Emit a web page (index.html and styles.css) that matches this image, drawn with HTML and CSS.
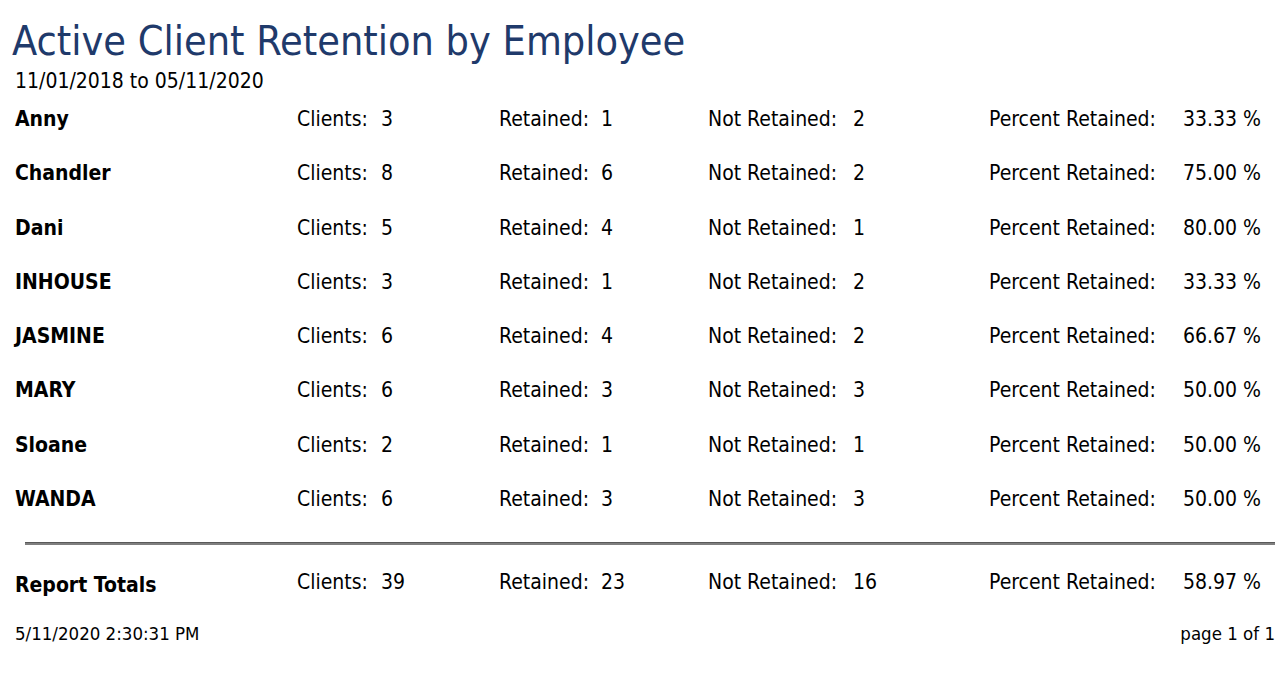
FILE: index.html
```html
<!DOCTYPE html>
<html>
<head>
<meta charset="utf-8">
<link rel="stylesheet" href="styles.css">
</head>
<body>
<div class="report">
  <h1 class="title">Active Client Retention by Employee</h1>
  <div class="range">11/01/2018 to 05/11/2020</div>
  <div class="rows">
    <div class="row"><span class="name">Anny</span><span>Clients:</span><span>3</span><span>Retained:</span><span>1</span><span>Not Retained:</span><span>2</span><span>Percent Retained:</span><span>33.33 %</span></div>
    <div class="row"><span class="name">Chandler</span><span>Clients:</span><span>8</span><span>Retained:</span><span>6</span><span>Not Retained:</span><span>2</span><span>Percent Retained:</span><span>75.00 %</span></div>
    <div class="row"><span class="name">Dani</span><span>Clients:</span><span>5</span><span>Retained:</span><span>4</span><span>Not Retained:</span><span>1</span><span>Percent Retained:</span><span>80.00 %</span></div>
    <div class="row"><span class="name">INHOUSE</span><span>Clients:</span><span>3</span><span>Retained:</span><span>1</span><span>Not Retained:</span><span>2</span><span>Percent Retained:</span><span>33.33 %</span></div>
    <div class="row"><span class="name">JASMINE</span><span>Clients:</span><span>6</span><span>Retained:</span><span>4</span><span>Not Retained:</span><span>2</span><span>Percent Retained:</span><span>66.67 %</span></div>
    <div class="row"><span class="name">MARY</span><span>Clients:</span><span>6</span><span>Retained:</span><span>3</span><span>Not Retained:</span><span>3</span><span>Percent Retained:</span><span>50.00 %</span></div>
    <div class="row"><span class="name">Sloane</span><span>Clients:</span><span>2</span><span>Retained:</span><span>1</span><span>Not Retained:</span><span>1</span><span>Percent Retained:</span><span>50.00 %</span></div>
    <div class="row"><span class="name">WANDA</span><span>Clients:</span><span>6</span><span>Retained:</span><span>3</span><span>Not Retained:</span><span>3</span><span>Percent Retained:</span><span>50.00 %</span></div>
  </div>
  <hr class="rule">
  <div class="row totals"><span class="name">Report Totals</span><span>Clients:</span><span>39</span><span>Retained:</span><span>23</span><span>Not Retained:</span><span>16</span><span>Percent Retained:</span><span>58.97 %</span></div>
  <div class="footer"><span>5/11/2020 2:30:31 PM</span><span>page 1 of 1</span></div>
</div>
</body>
</html>
```

FILE: styles.css
```css
html, body {
  margin: 0;
  padding: 0;
  background: #ffffff;
}
body {
  font-family: "DejaVu Sans Condensed", "DejaVu Sans", sans-serif;
  color: #000;
}
.report {
  width: 1288px;
  height: 675px;
  box-sizing: border-box;
  padding: 16px 13px 0 15px;
}
.title {
  margin: 0 0 0 -3px;
  font-weight: normal;
  font-size: 41px;
  line-height: 50px;
  color: #1f3a6b;
  letter-spacing: 0;
}
.range {
  font-size: 21px;
  line-height: 28px;
  margin-top: 1px;
}
.rows {
  margin-top: 11px;
}
.row {
  display: grid;
  grid-template-columns: 282px 84px 118px 102px 107px 145px 136px 194px auto;
  height: 54.3px;
  align-items: start;
  font-size: 21px;
  line-height: 26px;
}
.row .name {
  font-weight: bold;
}
.rule {
  margin: 2px 0 0 10px;
  border: 0;
  height: 3px;
  background: #7f7f7f;
  border-top: 1px solid #5a5a5a;
  box-sizing: border-box;
}
.totals {
  margin-top: 24px;
  height: 54px;
}
.totals .name {
  margin-top: 3px;
}
.footer {
  display: flex;
  justify-content: space-between;
  font-size: 18.5px;
  line-height: 22px;
}
```
